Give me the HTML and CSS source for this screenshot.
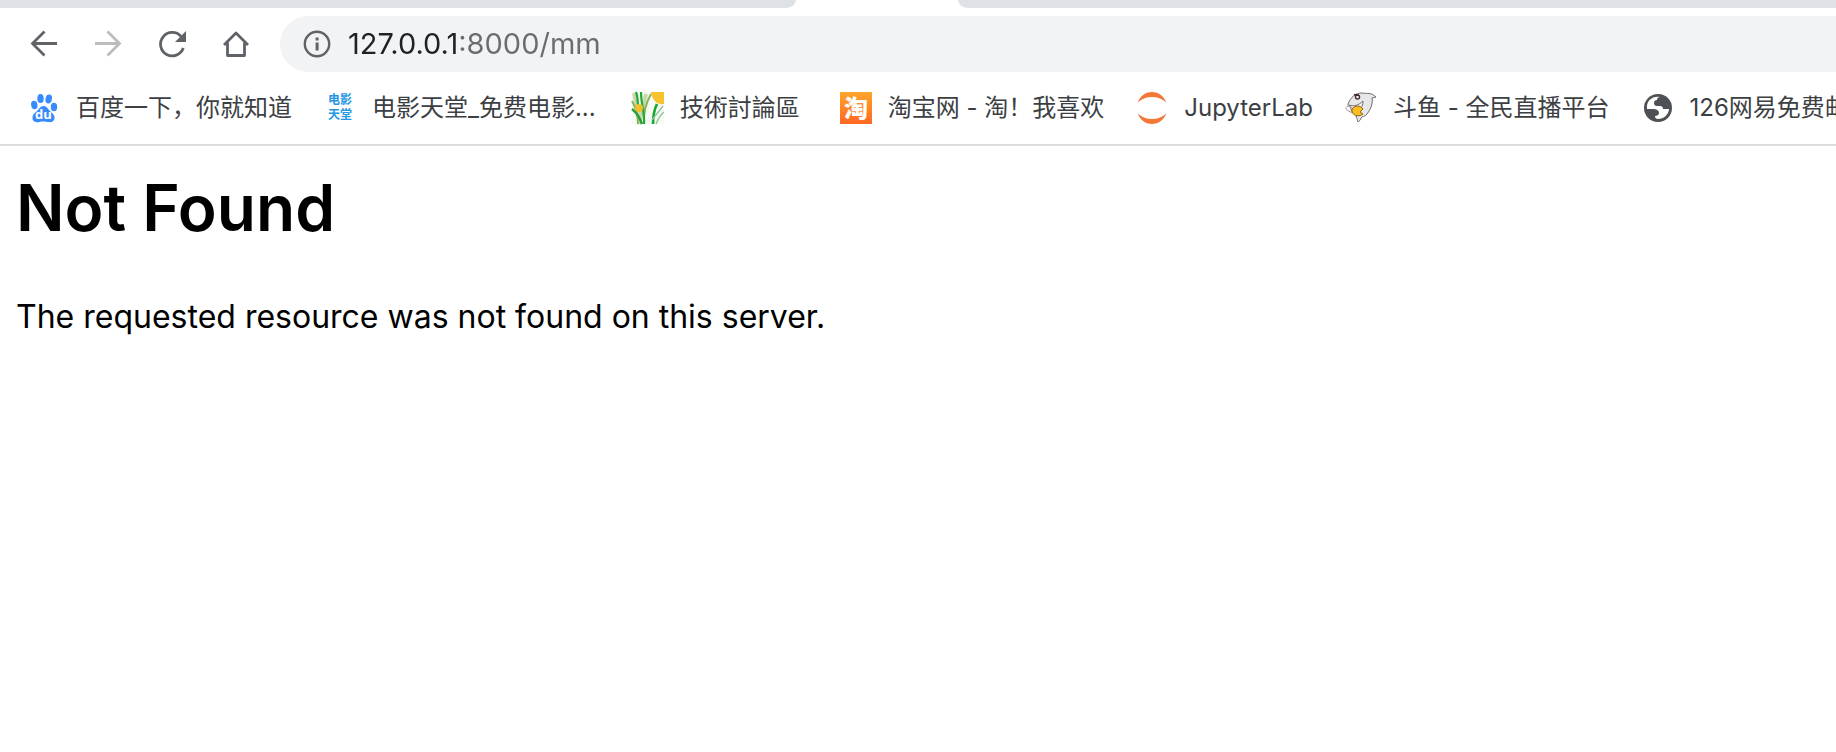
FILE: index.html
```html
<!DOCTYPE html>
<html lang="zh-CN">
<head>
<meta charset="utf-8">
<title>Not Found</title>
<link rel="stylesheet" href="styles.css">
</head>
<body>
<header class="chrome">
  <div class="tabstrip">
    <div class="tab tab-before"></div>
    <div class="tab-active"></div>
    <div class="tab tab-after"></div>
  </div>
  <div class="toolbar">
    <button class="nav" type="button" aria-label="Back">
      <svg viewBox="0 0 32 32" fill="none" stroke="#5f6368" stroke-width="2.8"><path d="M29 15.500H5M16.500 3.500l-12 12 12 12"/></svg>
    </button>
    <button class="nav" type="button" aria-label="Forward" disabled>
      <svg viewBox="0 0 32 32" fill="none" stroke="#babcbe" stroke-width="2.8"><path d="M3 15.500h24M15.500 3.500l12 12-12 12"/></svg>
    </button>
    <button class="nav" type="button" aria-label="Reload">
      <svg viewBox="0 0 32 32"><path d="M27.300 20A11.700 11.700 0 1 1 25 8.400" fill="none" stroke="#5f6368" stroke-width="2.800"/><path d="M30 3v11H19z" fill="#5f6368"/></svg>
    </button>
    <button class="nav" type="button" aria-label="Home">
      <svg viewBox="0 0 32 32" fill="none" stroke="#5f6368" stroke-width="2.800"><path d="M4 17 16 5l12 12M7.500 14.500v13h17v-13" stroke-linejoin="round"/></svg>
    </button>
    <form class="omnibox">
      <svg class="info" viewBox="0 0 28 28"><circle cx="14" cy="14" r="12.200" fill="none" stroke="#5f6368" stroke-width="2.400"/><path d="M12.600 7.500h3v3h-3zM12.600 12.500h3v8h-3z" fill="#5f6368"/></svg>
      <input class="url" type="text" aria-label="Address" value="127.0.0.1:8000/mm">
    </form>
  </div>
  <nav class="bookmarks">
    <a class="bookmark" href="#">
      <svg class="favicon" viewBox="0 0 32 32"><g fill="#388bfc"><ellipse cx="12.500" cy="6.500" rx="3.200" ry="4.500"/><ellipse cx="20.700" cy="7" rx="3.200" ry="4.500" transform="rotate(12 20.700 7)"/><ellipse cx="6.300" cy="13" rx="3.200" ry="4.200" transform="rotate(-10 6.300 13)"/><ellipse cx="26" cy="15" rx="3.200" ry="4.200"/><path d="M15.500 14c3 0 4 2.500 6.500 5s5 4 4.500 7.500-3.500 4-6 3.500-6-.8-9 0-7 0-7-4 2.500-5 4.500-7 3.500-5 6.500-5z"/></g><text class="glyph-du" x="15.500" y="27">du</text></svg>
      <span>百度一下，你就知道</span>
    </a>
    <a class="bookmark bookmark-spaced" href="#">
      <svg class="favicon" viewBox="0 0 32 32"><text class="glyph-film" x="16" y="12">电影</text><text class="glyph-film" x="16" y="27">天堂</text></svg>
      <span>电影天堂_免费电影...</span>
    </a>
    <a class="bookmark bookmark-wide" href="#">
      <svg class="favicon" viewBox="0 0 32 32"><path fill="#f7faf2" d="M0 0h32v32H0z"/><g fill="none"><path d="M2 1c2 10 5 20 6 31M14 2 7 32" stroke="#c9d9ab" stroke-width="4"/><path d="M0 9c4 7 6 15 6 23M19 2C14 11 11 20 12 32" stroke="#86b45a" stroke-width="2"/><path d="M4 0c2 5 2 10 2 18M9 0c0 12 4 22 3 32" stroke="#22aa35" stroke-width="2.200"/><path d="M0 17c5 4 8 9 10 15" stroke="#299f38" stroke-width="2.400"/><path d="M25 12c-3 6-4 12-4 20" stroke="#13a72e" stroke-width="2.600"/><path d="M31 14 20 28M32 20c-4 3-6 7-8 12" stroke="#91c49a" stroke-width="1.500"/></g><path d="M19 0h13v12c-7 1-12-4-13-12z" fill="#f8c22d"/><circle cx="7" cy="16" r="4" fill="#f3be2d"/></svg>
      <span>技術討論區</span>
    </a>
    <a class="bookmark" href="#">
      <svg class="favicon" viewBox="0 0 32 32"><defs><linearGradient id="orange" x2="0" y2="1"><stop stop-color="#ffa62b"/><stop offset="1" stop-color="#ff6726"/></linearGradient></defs><path fill="url(#orange)" d="M0 0h32v32H0z"/><text class="glyph-tao" x="16" y="25">淘</text></svg>
      <span>淘宝网 - 淘！我喜欢</span>
    </a>
    <a class="bookmark" href="#">
      <svg class="favicon" viewBox="0 0 32 32"><g fill="#f37735"><path d="M1.500 10.500C4.500 4 9.500 0 16 0s11.500 4 14.500 10.500C26.500 7 22 5 16 5S5.500 7 1.500 10.500z"/><path d="M1.500 21.500C4.500 28 9.500 32 16 32s11.500-4 14.500-10.500C26.500 25 22 27 16 27S5.500 25 1.500 21.500z"/></g></svg>
      <span>JupyterLab</span>
    </a>
    <a class="bookmark" href="#">
      <svg class="favicon" viewBox="0 0 32 32"><path d="M3 12C6 5 10 1 17 1c5 1 9-1 14 4l-4 1c1 5-1 11-5 16-2 3-5 2-6 4 0 2-2 3-3 4-1-2 0-3-2-5l1-2c-4-1-7-5-6-8-2 0-3-1-3-3z" fill="#e6e7ea" stroke="#75696c" stroke-width="1"/><path d="M4 13c5 2 10 0 14-4 0 6-3 9-7 8" fill="#f6f4f5" stroke="#7a686d" stroke-width="1"/><circle cx="12.500" cy="5" r="2" fill="#fff" stroke="#4b2f35" stroke-width="1.500"/><path d="m9 2.500 5 1" stroke="#39262b" stroke-width="1.500"/><path d="M7 17c-1 6 6 9 11 5l-3-2 3-3c-3-4-8-4-11 0z" fill="#fdbd20" stroke="#8a6418" stroke-width="1"/><path d="M5 14c-4 0-5 2-3 4l5 3" fill="none" stroke="#a89297"/></svg>
      <span>斗鱼 - 全民直播平台</span>
    </a>
    <a class="bookmark" href="#">
      <svg class="favicon" viewBox="0 0 32 32"><circle cx="16" cy="16" r="14" fill="#4d5156"/><path d="M18 5c-2 0-3 1-3 3-2 0-3 1-3 3s1 3 3 3h3c2 0 3 1 3 3h6c0 5-5 10-11 10-2 0-3-1-3-3 2 0 4-1 4-3 0-3-3-4-6-4H5C4 9 10 4 18 5z" fill="#fff"/></svg>
      <span>126网易免费邮</span>
    </a>
  </nav>
</header>
<main class="page">
  <h1 class="title">Not Found</h1>
  <p class="message">The requested resource was not found on this server.</p>
</main>
</body>
</html>
```
FILE: styles.css
```css
* { box-sizing: border-box; }
body {
  margin: 0;
  background: #fff;
  overflow-x: hidden;
  font-family: Inter, "Noto Sans CJK SC", sans-serif;
}
.chrome { border-bottom: 2px solid #dadce0; }
.tabstrip { display: flex; height: 8px; overflow: hidden; }
.tab { background: #dee1e6; }
.tab-before { width: 796px; border-bottom-right-radius: 16px 12px; }
.tab-active { width: 162px; }
.tab-after { flex: 1; border-bottom-left-radius: 16px 12px; }
.toolbar {
  display: flex;
  align-items: center;
  gap: 8px;
  padding: 8px 0 0 16px;
}
.nav {
  display: grid;
  place-items: center;
  width: 56px;
  height: 56px;
  padding: 0;
  border: 0;
  background: none;
}
.nav svg { width: 32px; height: 32px; }
.omnibox {
  display: flex;
  flex: 1;
  align-items: center;
  height: 56px;
  margin-left: 8px;
  padding-left: 23px;
  gap: 17px;
  border-radius: 28px 0 0 28px;
  background: #f1f3f4;
}
.info { width: 28px; height: 28px; }
.url {
  flex: 1;
  height: 40px;
  padding: 0;
  border: 0;
  outline: 0;
  font: 29px/40px Inter, sans-serif;
  color: transparent;
  background: linear-gradient(90deg, #202124 111px, #696c70 111px);
  -webkit-background-clip: text;
  background-clip: text;
}
.bookmarks {
  display: flex;
  align-items: center;
  gap: 32px;
  height: 72px;
  padding: 0 0 0 28px;
  overflow: hidden;
}
.bookmark {
  display: flex;
  flex: none;
  align-items: center;
  gap: 16px;
  color: #3c4043;
  font-size: 24px;
  line-height: 32px;
  text-decoration: none;
  white-space: nowrap;
}
.bookmark-spaced { padding-right: 4px; }
.bookmark-wide { padding-right: 8px; }
.favicon { width: 32px; height: 32px; overflow: visible; }
.glyph-du { font: 700 13px "Open Sans", sans-serif; fill: #fff; text-anchor: middle; }
.glyph-film { font: 700 12px "Noto Sans CJK SC", sans-serif; fill: #2496e4; text-anchor: middle; }
.glyph-tao { font: 900 24px "Noto Sans CJK SC", sans-serif; fill: #fff; text-anchor: middle; }
.page { padding: 22px 16px; color: #000; }
.title { margin: 0; font-size: 64px; line-height: 80px; font-weight: 600; }
.message { margin: 49px 0 0; font-size: 32px; line-height: 40px; }
```
